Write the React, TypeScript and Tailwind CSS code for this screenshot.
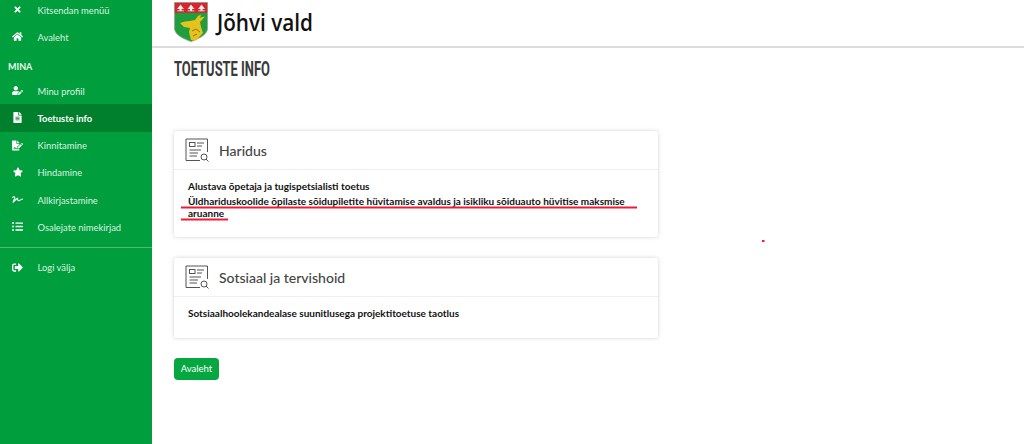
import { FaTimes, FaHome, FaUserEdit, FaFileAlt, FaFileSignature, FaStar, FaSignature, FaListUl, FaSignOutAlt } from "react-icons/fa";
import type { ComponentType, ReactNode } from "react";

function NavRow({ icon: Icon, label, active, size = 12 }: { icon: ComponentType<{ size?: number }>; label: string; active?: boolean; size?: number }) {
  return (
    <div className={`flex items-center h-[27.25px] pl-[9px] ${active ? "bg-[#007f2d] font-bold text-white" : "text-[#d9f3e0]"}`}>
      <span className="w-[17px] flex justify-center text-white"><Icon size={size} /></span>
      <span className="ml-[11.5px] text-[9.4px] translate-y-[0.5px]">{label}</span>
    </div>
  );
}

function Logo() {
  return (
    <svg width="34" height="40" viewBox="0 0 34 40" className="block">
      <path d="M0.4 0.4H33.6V26C33.6 33 24 37 17 39.6C10 37 0.4 33 0.4 26Z" fill="#1f9e3e" stroke="#9aa59c" strokeWidth="0.8" />
      <rect x="0.8" y="0.8" width="32.4" height="10" fill="#d9232e" />
      {[6.5, 17, 27.5].map((x) => (
        <path key={x} d={`M${x} 2.5L${x + 3.4} 7H${x + 1}V8.4H${x + 3.4}V9.2H${x - 3.4}V8.4H${x - 1}V7H${x - 3.4}Z`} fill="#f3f3f3" />
      ))}
      <path d="M6 21L11 19.5L16 19L21 18L24 14L27 12.5L26 15.5L31 14.5L28 18L26 20L27 25L29 31L22 38.5L17 38L15 30L16 26L10 25Z" fill="#e6c21c" />
      <path d="M18 29L22 27L26 30M19 34L23 32" stroke="#8a7a1a" strokeWidth="1" fill="none" />
    </svg>
  );
}

function DocSearchIcon() {
  return (
    <svg width="24" height="24" viewBox="0 0 24 24" fill="none" stroke="#555" strokeWidth="1" className="block">
      <path d="M15 22.5H1V1H22.5V14" />
      <rect x="4.5" y="4.5" width="5.5" height="4" />
      <path d="M12 5H19M12 8H17M4.5 12H16M4.5 15H13M4.5 18H12" />
      <circle cx="19" cy="19" r="3" />
      <path d="M21 21L23.5 23.5" />
    </svg>
  );
}

function Card({ title, children, bodyClass }: { title: string; children: ReactNode; bodyClass: string }) {
  return (
    <section className="w-[484px] bg-white rounded-[3px] shadow-[0_0_4px_rgba(0,0,0,0.18)]">
      <div className="h-[39px] flex items-center pl-[11px] border-b border-[#eeeeee]">
        <DocSearchIcon />
        <h2 className="ml-[10px] text-[14px] font-medium text-[#444444]">{title}</h2>
      </div>
      <div className={`px-[14px] ${bodyClass}`}>{children}</div>
    </section>
  );
}

export default function App() {
  return (
    <div className="flex h-screen overflow-hidden bg-white font-['Lato','Liberation_Sans',sans-serif]">
      <aside className="w-[152px] shrink-0 bg-[#009e3c]">
        <div className="-mt-[4px]">
          <NavRow icon={FaTimes} label="Kitsendan menüü" size={9} />
          <NavRow icon={FaHome} label="Avaleht" size={11} />
          <div className="h-[26.5px] pt-[9px] pl-[8px] text-[9px] font-bold text-[#e8f8ec] leading-[14px]">MINA</div>
          <NavRow icon={FaUserEdit} label="Minu profiil" size={11} />
          <NavRow icon={FaFileAlt} label="Toetuste info" active size={11} />
          <NavRow icon={FaFileSignature} label="Kinnitamine" size={11} />
          <NavRow icon={FaStar} label="Hindamine" size={10} />
          <NavRow icon={FaSignature} label="Allkirjastamine" size={11} />
          <NavRow icon={FaListUl} label="Osalejate nimekirjad" size={11} />
          <div className="mt-[6px] border-t border-[#4dbb76]" />
          <div className="mt-[6px]"><NavRow icon={FaSignOutAlt} label="Logi välja" size={11} /></div>
        </div>
      </aside>
      <main className="flex-1 min-w-0 flex flex-col">
        <header className="h-[48px] shrink-0 border-b-2 border-[#dcdcdc] flex items-start pl-[22px] pt-[2px]">
          <Logo />
          <div className="ml-[9px] mt-[4px] text-[23px] leading-[32px] font-semibold text-[#111111] font-['Open_Sans',sans-serif] origin-left scale-x-[0.9] whitespace-nowrap">Jõhvi vald</div>
        </header>
        <div className="pl-[22px] relative flex-1">
          <h1 className="mt-[9px] h-[24px] text-[21px] leading-[24px] font-bold text-[#3a3a3a] font-['Roboto',sans-serif] origin-left scale-x-[0.615] whitespace-nowrap">TOETUSTE INFO</h1>
          <div className="mt-[50px]">
            <Card title="Haridus" bodyClass="pt-[10px] h-[67px] text-[10px] font-bold text-[#111111] leading-[12px]">
              <div>Alustava õpetaja ja tugispetsialisti toetus</div>
              <div className="mt-[3px] w-[445px]">Üldhariduskoolide õpilaste sõidupiletite hüvitamise avaldus ja isikliku sõiduauto hüvitise maksmise aruanne</div>
            </Card>
          </div>
          <div className="mt-[21px]">
            <Card title="Sotsiaal ja tervishoid" bodyClass="pt-[10px] h-[41px] text-[10px] font-bold text-[#111111] leading-[12px]">
              <div>Sotsiaalhoolekandealase suunitlusega projektitoetuse taotlus</div>
            </Card>
          </div>
          <button className="mt-[20px] block h-[22px] w-[45px] rounded-[4px] bg-[#06a640] text-[9.5px] text-white">Avaleht</button>
          <svg className="absolute left-[29px] top-[145px] overflow-visible" width="640" height="60" fill="none" stroke="#ee1c32" strokeWidth="2">
            <path d="M0 14.5H456" />
            <path d="M0 26.5H47" />
            <rect x="581" y="47" width="2.5" height="2" fill="#ee1c32" stroke="none" />
          </svg>
        </div>
      </main>
    </div>
  );
}
